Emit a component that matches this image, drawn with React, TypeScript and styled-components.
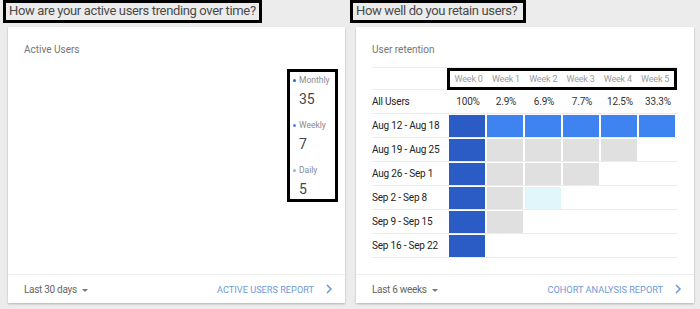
import styled, { createGlobalStyle } from "styled-components";

const GlobalStyle = createGlobalStyle`
    body {
        margin: 0;
        background: #ececec;
        font-family: Roboto, "Liberation Sans", sans-serif;
    }
`

const Page = styled.div`
    display: grid;
    grid-template-columns: 350px 350px;
    width: 700px;
    height: 309px;
    overflow: hidden;
`

const Column = styled.div`
    display: flex;
    flex-direction: column;
    align-items: flex-start;
`

const Question = styled.div<{ $width: number; $shift: number }>`
    box-sizing: border-box;
    width: ${p => p.$width}px;
    height: 23px;
    margin-left: ${p => p.$shift}px;
    border: 3px solid #000;
    padding: 0 0 0 3px;
    font-size: 13px;
    letter-spacing: -0.36px;
    line-height: 16px;
    color: #4a4a4a;
    white-space: nowrap;
`

const Card = styled.div<{ $width: number; $shift: number }>`
    box-sizing: border-box;
    width: ${p => p.$width}px;
    height: 276px;
    margin-top: 4px;
    margin-left: ${p => p.$shift}px;
    background: #fff;
    box-shadow: 0 1px 2px rgba(0, 0, 0, 0.25);
    display: flex;
    flex-direction: column;
`

const CardBody = styled.div`
    flex: 1;
    display: flex;
    flex-direction: column;
    padding: 16px 16px 0 16px;
`

const CardTitle = styled.div`
    font-size: 10px;
    line-height: 14px;
    color: #757575;
`

const Legend = styled.div`
    box-sizing: border-box;
    align-self: flex-end;
    width: 51px;
    height: 133px;
    margin: 12px -9px 0 0;
    border: 3px solid #000;
    padding: 2px 0 0 3px;
    display: flex;
    flex-direction: column;
`

const LegendLabel = styled.div<{ $dot: string }>`
    display: flex;
    align-items: center;
    gap: 3px;
    font-size: 8.5px;
    line-height: 12px;
    color: #8a8a8a;

    &::before {
        content: "";
        width: 3px;
        height: 3px;
        border-radius: 50%;
        background: ${p => p.$dot};
    }
`

const LegendValue = styled.div`
    font-size: 14px;
    line-height: 20px;
    padding: 3px 0 10px 6px;
    color: #454545;
`

const Footer = styled.div`
    height: 28px;
    border-top: 1px solid #eeeeee;
    padding: 0 16px;
    display: flex;
    align-items: center;
    justify-content: space-between;
`

const Range = styled.div`
    display: flex;
    align-items: center;
    gap: 5px;
    font-size: 10px;
    letter-spacing: -0.3px;
    color: #666;

    &::after {
        content: "";
        border-left: 3.5px solid transparent;
        border-right: 3.5px solid transparent;
        border-top: 3.5px solid #777;
        margin-top: 2px;
    }
`

const ReportLink = styled.div`
    display: flex;
    align-items: center;
    gap: 11px;
    font-size: 9.2px;
    color: #6f9ad6;

    svg {
        margin-right: -4px;
    }
`

const Table = styled.div`
    margin-top: 10px;
    width: 305px;
    border-top: 1px solid #ebebeb;
    display: flex;
    flex-direction: column;
`

const Row = styled.div<{ $height: number }>`
    height: ${p => p.$height}px;
    border-bottom: 1px solid #ebebeb;
    display: flex;
    align-items: center;
`

const RowLabel = styled.div`
    width: 77px;
    font-size: 10px;
    letter-spacing: -0.2px;
    color: #222;
    white-space: nowrap;
`

const WeekBox = styled.div`
    box-sizing: border-box;
    width: 230px;
    height: 22px;
    margin-left: -2px;
    border: 3px solid #000;
    display: flex;
    align-items: center;
`

const WeekHead = styled.div`
    width: 37.3px;
    text-align: center;
    font-size: 9px;
    letter-spacing: -0.2px;
    color: #9a9a9a;
    white-space: nowrap;
`

const Pct = styled.div`
    width: 38px;
    text-align: center;
    font-size: 10px;
    letter-spacing: -0.2px;
    color: #333;
`

const Cells = styled.div`
    display: flex;
    gap: 2px;
    align-self: stretch;
    padding: 1px 0 0 0;
`

const Cell = styled.div<{ $tone: string }>`
    width: 36px;
    height: 22px;
    background: ${p => p.$tone};
`

const tones: Record<string, string> = {
    d: "#2b5cc6",
    b: "#3e83ef",
    g: "#e0e0e0",
    c: "#e1f6fa",
}

const cohorts = [
    { label: "Aug 12 - Aug 18", cells: "dbbbbb" },
    { label: "Aug 19 - Aug 25", cells: "dgggg" },
    { label: "Aug 26 - Sep 1", cells: "dggg" },
    { label: "Sep 2 - Sep 8", cells: "dgc" },
    { label: "Sep 9 - Sep 15", cells: "dg" },
    { label: "Sep 16 - Sep 22", cells: "d" },
]

const percents = ["100%", "2.9%", "6.9%", "7.7%", "12.5%", "33.3%"]

function Chevron() {
    return (
        <svg width="8" height="10" viewBox="0 0 8 10">
            <path d="M2 1 L6 5 L2 9" fill="none" stroke="#6f9ad6" strokeWidth="1.6" />
        </svg>
    )
}

function ActiveUsersCard() {
    return (
        <Card $width={337} $shift={8}>
            <CardBody>
                <CardTitle>Active Users</CardTitle>
                <Legend>
                    <LegendLabel $dot="#3367d6">Monthly</LegendLabel>
                    <LegendValue>35</LegendValue>
                    <LegendLabel $dot="#4a86e8">Weekly</LegendLabel>
                    <LegendValue>7</LegendValue>
                    <LegendLabel $dot="#7fc4d8">Daily</LegendLabel>
                    <LegendValue>5</LegendValue>
                </Legend>
            </CardBody>
            <Footer>
                <Range>Last 30 days</Range>
                <ReportLink>ACTIVE USERS REPORT <Chevron /></ReportLink>
            </Footer>
        </Card>
    )
}

function RetentionCard() {
    return (
        <Card $width={338} $shift={6}>
            <CardBody>
                <CardTitle>User retention</CardTitle>
                <Table>
                    <Row $height={21}>
                        <RowLabel />
                        <WeekBox>
                            {[0, 1, 2, 3, 4, 5].map(w => (
                                <WeekHead key={w}>Week {w}</WeekHead>
                            ))}
                        </WeekBox>
                    </Row>
                    <Row $height={23}>
                        <RowLabel>All Users</RowLabel>
                        {percents.map(p => <Pct key={p}>{p}</Pct>)}
                    </Row>
                    {cohorts.map(c => (
                        <Row $height={23} key={c.label}>
                            <RowLabel>{c.label}</RowLabel>
                            <Cells>
                                {c.cells.split("").map((t, i) => (
                                    <Cell key={i} $tone={tones[t]} />
                                ))}
                            </Cells>
                        </Row>
                    ))}
                </Table>
            </CardBody>
            <Footer>
                <Range>Last 6 weeks</Range>
                <ReportLink>COHORT ANALYSIS REPORT <Chevron /></ReportLink>
            </Footer>
        </Card>
    )
}

export default function App() {
    return (
        <Page>
            <GlobalStyle />
            <Column>
                <Question $width={259} $shift={3}>How are your active users trending over time?</Question>
                <ActiveUsersCard />
            </Column>
            <Column>
                <Question $width={176} $shift={0}>How well do you retain users?</Question>
                <RetentionCard />
            </Column>
        </Page>
    )
}
